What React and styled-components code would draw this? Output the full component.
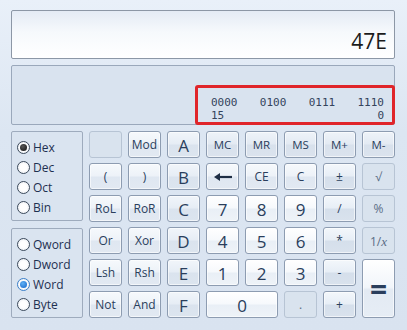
import styled, { createGlobalStyle } from "styled-components";

const GlobalStyle = createGlobalStyle`
    html, body {
        margin: 0;
        padding: 0;
        background: #dfe8f4;
    }
    * { box-sizing: border-box; }
`

const rows = [
    [{ t: "", k: "off" }, { t: "Mod" }, { t: "A", k: "hex" }, { t: "MC", k: "mem" }, { t: "MR", k: "mem" }, { t: "MS", k: "mem" }, { t: "M+", k: "mem" }, { t: "M-", k: "mem" }],
    [{ t: "(" }, { t: ")" }, { t: "B", k: "hex" }, { t: "back" }, { t: "CE" }, { t: "C" }, { t: "±", k: "op" }, { t: "√", k: "off" }],
    [{ t: "RoL" }, { t: "RoR" }, { t: "C", k: "hex" }, { t: "7", k: "num" }, { t: "8", k: "num" }, { t: "9", k: "num" }, { t: "/", k: "op" }, { t: "%", k: "off" }],
    [{ t: "Or" }, { t: "Xor" }, { t: "D", k: "hex" }, { t: "4", k: "num" }, { t: "5", k: "num" }, { t: "6", k: "num" }, { t: "*", k: "op" }, { t: "1/x", k: "off" }],
    [{ t: "Lsh" }, { t: "Rsh" }, { t: "E", k: "hex" }, { t: "1", k: "num" }, { t: "2", k: "num" }, { t: "3", k: "num" }, { t: "-", k: "op" }, { t: "=", k: "eq", rows: 2 }],
    [{ t: "Not" }, { t: "And" }, { t: "F", k: "hex" }, { t: "0", k: "num", cols: 2 }, { t: ".", k: "off" }, { t: "+", k: "op" }],
]

function BackArrow() {
    return (
        <svg width="20" height="10" viewBox="0 0 20 10">
            <path d="M6 5 H19" stroke="#1f2f45" strokeWidth="2.2" />
            <path d="M1 5 L7 1 L7 9 Z" fill="#1f2f45" />
        </svg>
    )
}

function Label({ t }) {
    if (t === "back") return <BackArrow />
    if (t === "1/x") return <span>1/<i>x</i></span>
    return t
}

export default function App() {
    return (
        <Main>
            <GlobalStyle />
            <Display>47E</Display>
            <BitPanel>
                <BitBox>
                    <BitRow>
                        <span>0000</span><span>0100</span><span>0111</span><span>1110</span>
                    </BitRow>
                    <BitRow>
                        <span>15</span><span>0</span>
                    </BitRow>
                </BitBox>
            </BitPanel>
            <Body>
                <Side>
                    <RadioGroup>
                        {["Hex", "Dec", "Oct", "Bin"].map(n => (
                            <RadioRow key={n}>
                                <Dot checked={n === "Hex"} />
                                {n}
                            </RadioRow>
                        ))}
                    </RadioGroup>
                    <RadioGroup>
                        {["Qword", "Dword", "Word", "Byte"].map(n => (
                            <RadioRow key={n}>
                                <Dot checked={n === "Word"} blue />
                                {n}
                            </RadioRow>
                        ))}
                    </RadioGroup>
                </Side>
                <Keys>
                    {rows.flat().map((b, i) => (
                        <Key key={i} kind={b.k || "fn"} span={b.cols} rowSpan={b.rows}>
                            <Label t={b.t} />
                        </Key>
                    ))}
                </Keys>
            </Body>
        </Main>
    )
}

const Main = styled.div`
    width: 407px;
    height: 330px;
    padding: 10px 12px 0 11px;
    background: linear-gradient(#e9f0f9, #dce6f2 40%, #d9e3f0);
    font-family: "Open Sans", "Noto Sans", sans-serif;
    overflow: hidden;
`
const Display = styled.div`
    height: 49px;
    border: 1px solid #8c97a6;
    border-radius: 2px;
    background: linear-gradient(#e4ebf5, #f6f9fc 45%, #ffffff);
    display: flex;
    align-items: flex-end;
    justify-content: flex-end;
    padding: 0 7px 4px 0;
    font-size: 21px;
    color: #1b1b1b;
    line-height: 1.2;
    margin-bottom: 6px;
`
const BitPanel = styled.div`
    height: 60px;
    border: 1px solid #9aa8bb;
    border-radius: 2px;
    background: #d9e3ef;
    display: flex;
    align-items: flex-end;
    justify-content: flex-end;
    margin-bottom: 6px;
`
const BitBox = styled.div`
    width: 200px;
    height: 40px;
    margin: 0 -1px -1px 0;
    border: 3px solid #e0252a;
    border-radius: 3px;
    padding: 8px 8px 0 13px;
    display: flex;
    flex-direction: column;
`
const BitRow = styled.div`
    display: flex;
    justify-content: space-between;
    font-family: "DejaVu Sans Mono", "Liberation Mono", monospace;
    font-size: 11px;
    line-height: 13px;
    color: #34445c;
`
const Body = styled.div`
    display: flex;
    gap: 6px;
`
const Side = styled.div`
    width: 72px;
    display: flex;
    flex-direction: column;
    gap: 7px;
`
const RadioGroup = styled.div`
    height: 90px;
    border: 1px solid #9eabbd;
    border-radius: 2px;
    background: #dae4f0;
    padding: 8px 0 0 5px;
    display: flex;
    flex-direction: column;
    gap: 6px;
`
const RadioRow = styled.div`
    display: flex;
    align-items: center;
    gap: 3px;
    height: 14px;
    font-size: 12px;
    color: #1e3050;
`
const Dot = styled.span`
    width: 13px;
    height: 13px;
    border-radius: 50%;
    border: 1px solid ${p => p.checked && p.blue ? "#3a7fc8" : "#3c4a5c"};
    background: radial-gradient(circle, #ffffff 40%, #e3e8ee);
    display: flex;
    align-items: center;
    justify-content: center;

    &::after {
        content: "";
        display: ${p => p.checked ? "block" : "none"};
        width: 7px;
        height: 7px;
        border-radius: 50%;
        background: ${p => p.blue ? "radial-gradient(circle at 40% 35%, #5fb0f5, #1565c8)" : "radial-gradient(circle at 40% 35%, #555, #111)"};
    }
`
const keyBg = {
    fn: "linear-gradient(#f6f9fc, #edf2f8 48%, #dfe7f1 52%, #e2e9f2)",
    mem: "linear-gradient(#eef3f9, #e3eaf3 48%, #d8e1ec 52%, #dbe3ee)",
    hex: "linear-gradient(#f1f5fa, #e6edf5 48%, #dae3ee 52%, #dce5ef)",
    num: "linear-gradient(#ffffff, #f6f9fc 48%, #e9eff6 52%, #eef3f8)",
    op: "linear-gradient(#f3f7fb, #e7eef6 48%, #d5dfeb 52%, #d9e2ed)",
    eq: "linear-gradient(#ffffff, #f1f5fa 48%, #e3eaf3 52%, #e6edf5)",
    off: "#d9e3ee",
}
const keySize = {
    fn: "12px", mem: "11.5px", hex: "17px", num: "17px", op: "12px", eq: "30px", off: "12px",
}

const Keys = styled.div`
    flex: 1;
    display: grid;
    grid-template-columns: repeat(8, 33px);
    grid-auto-rows: 27px;
    column-gap: 6px;
    row-gap: 5px;
`
const Key = styled.div`
    grid-column: span ${p => p.span || 1};
    grid-row: span ${p => p.rowSpan || 1};
    border: 1px solid ${p => p.kind === "off" ? "#b7c4d4" : "#8d9cb1"};
    border-radius: 3px;
    background: ${p => keyBg[p.kind]};
    box-shadow: ${p => p.kind === "off" ? "none" : "inset 0 0 0 1px rgba(255,255,255,0.6)"};
    display: flex;
    align-items: center;
    justify-content: center;
    font-size: ${p => keySize[p.kind]};
    font-weight: ${p => p.kind === "eq" ? 700 : 400};
    color: ${p => p.kind === "off" ? "#5a6d86" : "#2a3e5c"};
    line-height: 1;
    padding-top: ${p => p.kind === "eq" ? "0" : "1px"};

    i {
        font-family: "Liberation Serif", serif;
        font-size: 13px;
    }
`
